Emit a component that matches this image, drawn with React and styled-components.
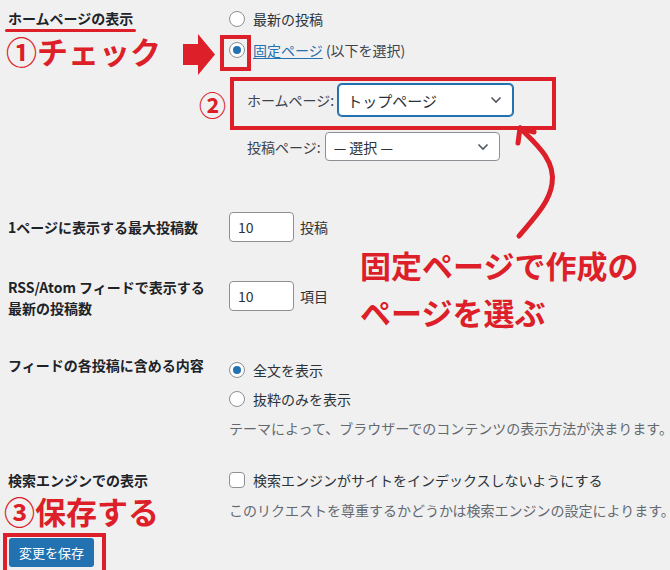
import React from 'react';
import styled, { createGlobalStyle } from 'styled-components';

const RED = '#dc1f28';
const BLUE = '#2271b1';

const GlobalStyle = createGlobalStyle`
  html, body {
    margin: 0;
    padding: 0;
    background: #f0f0f1;
    overflow: hidden;
  }
  body {
    font-family: "Noto Sans CJK JP", "Noto Sans", sans-serif;
    font-size: 14px;
    color: #2c3338;
  }
`;

const Page = styled.div`
  position: relative;
  width: 670px;
  height: 570px;
  padding-left: 8px;
  box-sizing: border-box;
  white-space: nowrap;
`;

/* ---------- form table ---------- */

const Row = styled.div`
  display: grid;
  grid-template-columns: 221px 1fr;
  align-items: start;
  margin-top: ${p => p.$mt || 0}px;
`;

const Label = styled.div`
  font-weight: 700;
  color: #1d2327;
  line-height: ${p => p.$lh || 30}px;
  white-space: ${p => (p.$wrap ? 'normal' : 'nowrap')};
`;

const Marked = styled.span`
  position: relative;
  &::after {
    content: '';
    position: absolute;
    left: -3px;
    right: -3px;
    top: 21px;
    height: 3px;
    border-radius: 2px;
    background: ${RED};
  }
`;

const Field = styled.div`
  display: flex;
  flex-direction: column;
  padding-top: ${p => p.$pt || 0}px;
`;

const Line = styled.label`
  display: flex;
  align-items: center;
  height: ${p => p.$h || 31}px;
  gap: 8px;
`;

const Radio = styled.span`
  box-sizing: border-box;
  width: 16px;
  height: 16px;
  border-radius: 50%;
  border: 1px solid #8c8f94;
  background: #fff;
  display: flex;
  align-items: center;
  justify-content: center;
  &::before {
    content: '';
    display: ${p => (p.$checked ? 'block' : 'none')};
    width: 8px;
    height: 8px;
    border-radius: 50%;
    background: ${BLUE};
  }
`;

const Checkbox = styled.span`
  box-sizing: border-box;
  width: 16px;
  height: 16px;
  border-radius: 4px;
  border: 1px solid #8c8f94;
  background: #fff;
`;

const Link = styled.a`
  color: ${BLUE};
  text-decoration: underline;
  text-underline-offset: 2px;
`;

const Muted = styled.span`
  color: #3c434a;
`;

const SubFields = styled.div`
  display: flex;
  flex-direction: column;
  gap: 16px;
  padding-left: 18px;
  margin-top: 19px;
`;

const SubRow = styled.div`
  display: flex;
  align-items: center;
  gap: 4px;
  color: #3c434a;
`;

const SelectBox = styled.div`
  box-sizing: border-box;
  width: 175px;
  height: ${p => (p.$focus ? 32 : 29)}px;
  display: flex;
  align-items: center;
  justify-content: space-between;
  padding: 0 10px 0 8px;
  background: #fff;
  border-radius: 4px;
  border: 1px solid ${p => (p.$focus ? BLUE : '#8c8f94')};
  box-shadow: ${p => (p.$focus ? `0 0 0 1px ${BLUE}` : 'none')};
  color: #2c3338;
  font-size: ${p => (p.$focus ? 15 : 14)}px;
`;

const InputRow = styled.div`
  display: flex;
  align-items: center;
  gap: 6px;
  padding-top: ${p => p.$pt || 0}px;
`;

const NumberBox = styled.div`
  box-sizing: border-box;
  width: 65px;
  height: 30px;
  display: flex;
  align-items: center;
  padding-left: 8px;
  background: #fff;
  border: 1px solid #8c8f94;
  border-radius: 4px;
  color: #2c3338;
`;

const Description = styled.p`
  margin: 5px 0 0;
  line-height: 21px;
  color: #646970;
`;

const Submit = styled.button`
  margin: 17px 0 0 1px;
  height: 29px;
  padding: 0 10px;
  border: 0;
  border-radius: 3px;
  background: ${BLUE};
  color: #fff;
  font-family: inherit;
  font-size: 13px;
`;

/* ---------- red annotations (overlay) ---------- */

const Callout = styled.div`
  position: absolute;
  left: ${p => p.$x}px;
  top: ${p => p.$y}px;
  color: ${RED};
  font-weight: 700;
  font-size: ${p => p.$size || 31}px;
  line-height: ${p => p.$lh || 1};
  letter-spacing: ${p => p.$ls || 0}px;
  white-space: pre;
`;

const Frame = styled.div`
  position: absolute;
  left: ${p => p.$x}px;
  top: ${p => p.$y}px;
  width: ${p => p.$w}px;
  height: ${p => p.$h}px;
  box-sizing: border-box;
  border: 4px solid ${RED};
  pointer-events: none;
`;

const Drawing = styled.svg`
  position: absolute;
  left: ${p => p.$x}px;
  top: ${p => p.$y}px;
  overflow: visible;
`;

const Chevron = () => (
  <svg width="12" height="8" viewBox="0 0 12 8">
    <path d="M1.5 1.5 L6 6 L10.5 1.5" fill="none" stroke="#50575e" strokeWidth="1.6" />
  </svg>
);

const App = () => {
  return (
    <>
      <GlobalStyle />
      <Page>
        <Row $mt={3}>
          <Label><Marked>ホームページの表示</Marked></Label>
          <Field>
            <Line><Radio />最新の投稿</Line>
            <Line><Radio $checked /><span><Link>固定ページ</Link> <Muted>(以下を選択)</Muted></span></Line>
            <SubFields>
              <SubRow>
                ホームページ:
                <SelectBox $focus>トップページ<Chevron /></SelectBox>
              </SubRow>
              <SubRow>
                投稿ページ:
                <SelectBox>— 選択 —<Chevron /></SelectBox>
              </SubRow>
            </SubFields>
          </Field>
        </Row>

        <Row $mt={51}>
          <Label>1ページに表示する最大投稿数</Label>
          <InputRow><NumberBox>10</NumberBox>投稿</InputRow>
        </Row>

        <Row $mt={35}>
          <Label $lh={21} $wrap>RSS/Atom フィードで表示する<br />最新の投稿数</Label>
          <InputRow $pt={4}><NumberBox>10</NumberBox>項目</InputRow>
        </Row>

        <Row $mt={36}>
          <Label $lh={21}>フィードの各投稿に含める内容</Label>
          <Field>
            <Line $h={29}><Radio $checked />全文を表示</Line>
            <Line $h={29}><Radio />抜粋のみを表示</Line>
            <Description>テーマによって、ブラウザーでのコンテンツの表示方法が決まります。</Description>
          </Field>
        </Row>

        <Row $mt={26}>
          <Label>検索エンジンでの表示</Label>
          <Field>
            <Line $h={30}><Checkbox />検索エンジンがサイトをインデックスしないようにする</Line>
            <Description>このリクエストを尊重するかどうかは検索エンジンの設定によります。</Description>
          </Field>
        </Row>

        <Submit>変更を保存</Submit>

        {/* annotations */}
        <Callout $x={6} $y={32}>①チェック</Callout>
        <Drawing $x={183} $y={31} width="33" height="41" viewBox="0 0 33 41">
          <polygon points="0,10 15,10 15,0 32,20.5 15,41 15,31 0,31" fill={RED} />
        </Drawing>
        <Frame $x={220} $y={32} $w={31} $h={36} />

        <Callout $x={199} $y={88} $size={27}>②</Callout>
        <Frame $x={230} $y={74} $w={326} $h={53} />

        <Drawing $x={500} $y={115} width="70" height="130" viewBox="0 0 70 130">
          <path
            d="M20 10 C35 25 56 42 52 66 C49 86 32 102 19 118"
            fill="none"
            stroke={RED}
            strokeWidth="5"
            strokeLinecap="round"
          />
          <path
            d="M18 25 L20 10 L34 14"
            fill="none"
            stroke={RED}
            strokeWidth="5"
            strokeLinecap="round"
            strokeLinejoin="round"
          />
        </Drawing>
        <Callout $x={360} $y={238} $lh={1.52}>{'固定ページで作成の\nページを選ぶ'}</Callout>

        <Callout $x={4} $y={492}>③保存する</Callout>
        <Frame $x={3} $y={530} $w={103} $h={44} />
      </Page>
    </>
  );
};

export default App;
